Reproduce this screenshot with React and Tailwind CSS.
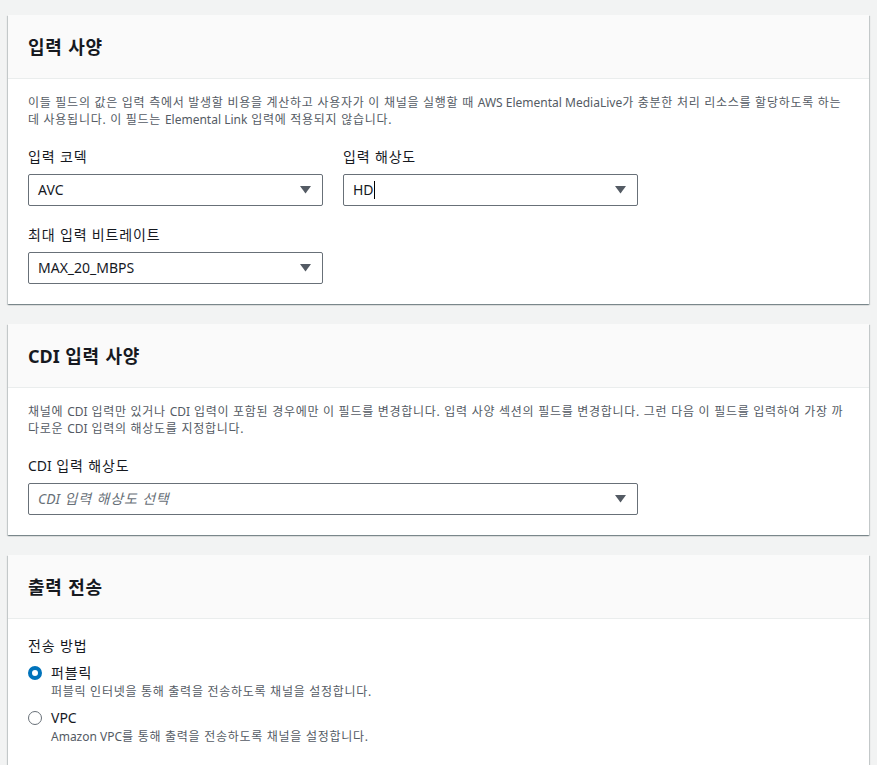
const font = { fontFamily: '"Noto Sans", "Noto Sans CJK KR", sans-serif' };

function Caret() {
  return (
    <svg width="11" height="8" viewBox="0 0 11 8" className="shrink-0">
      <path d="M0 0 H11 L5.5 7.5 Z" fill="#545b64" />
    </svg>
  );
}

// Latin runs keep normal spacing, hangul gets a bit wider
function L({ children }) {
  return <span className="tracking-normal">{children}</span>;
}

function Select({ value, placeholder, cursor }) {
  return (
    <div className="flex h-8 items-center justify-between rounded-[2px] border border-[#687078] bg-white pl-[9px] pr-[11px]">
      {value ? (
        <span className="flex items-center text-sm text-[#16191f]">
          {value}
          {cursor && <span className="inline-block h-[18px] w-px bg-black" />}
        </span>
      ) : (
        <span className="text-sm italic tracking-[0.06em] text-[#687078]">{placeholder}</span>
      )}
      <Caret />
    </div>
  );
}

function Field({ label, children }) {
  return (
    <div>
      <div className="mb-[6px] text-sm leading-[22px] tracking-[0.06em] text-[#16191f]">{label}</div>
      {children}
    </div>
  );
}

function Card({ title, children }) {
  return (
    <div className="bg-white shadow-[0_1px_1px_0_rgba(0,28,36,0.3),1px_1px_1px_0_rgba(0,28,36,0.15),-1px_1px_1px_0_rgba(0,28,36,0.15)]">
      <div className="border-b border-[#eaeded] bg-[#fafafa] px-5 pt-5 pb-[19px]">
        <h2 className="text-lg font-bold leading-6 tracking-[0.045em] text-[#16191f]">{title}</h2>
      </div>
      <div className="px-5 pb-5 pt-[15px]">{children}</div>
    </div>
  );
}

function Radio({ checked, label, desc }) {
  return (
    <div className="flex gap-[9px]">
      <div className="pt-[4px]">
        {checked ? (
          <div className="h-[14px] w-[14px] rounded-full border-[4px] border-[#0073bb] bg-white" />
        ) : (
          <div className="h-[14px] w-[14px] rounded-full border-[1.5px] border-[#687078] bg-white" />
        )}
      </div>
      <div>
        <div className="text-sm leading-[22px] tracking-[0.06em] text-[#16191f]">{label}</div>
        <div className="text-xs leading-4 tracking-[0.06em] text-[#545b64]">{desc}</div>
      </div>
    </div>
  );
}

export default function App() {
  return (
    <div style={font} className="min-h-[765px] bg-[#f2f3f3] px-2 pt-[15px] pb-5">
      <div className="flex flex-col gap-5">
        <Card title="입력 사양">
          <p className="text-xs leading-[17px] tracking-[0.06em] text-[#545b64]">
            이들 필드의 값은 입력 측에서 발생할 비용을 계산하고 사용자가 이 채널을 실행할 때 <L>AWS Elemental MediaLive</L>가 충분한 처리 리소스를 할당하도록 하는 데 사용됩니다. 이 필드는 <L>Elemental Link</L> 입력에 적용되지 않습니다.
          </p>
          <div className="mt-[18px] grid w-[610px] grid-cols-2 gap-x-5 gap-y-[18px]">
            <Field label="입력 코덱">
              <Select value="AVC" />
            </Field>
            <Field label="입력 해상도">
              <Select value="HD" cursor />
            </Field>
            <Field label="최대 입력 비트레이트">
              <Select value="MAX_20_MBPS" />
            </Field>
          </div>
        </Card>

        <Card title={<><L>CDI</L> 입력 사양</>}>
          <p className="text-xs leading-[17px] tracking-[0.06em] text-[#545b64]">
            채널에 <L>CDI</L> 입력만 있거나 <L>CDI</L> 입력이 포함된 경우에만 이 필드를 변경합니다. 입력 사양 섹션의 필드를 변경합니다. 그런 다음 이 필드를 입력하여 가장 까다로운 <L>CDI</L> 입력의 해상도를 지정합니다.
          </p>
          <div className="mt-[18px] w-[610px]">
            <Field label={<><L>CDI</L> 입력 해상도</>}>
              <Select placeholder={<><L>CDI</L> 입력 해상도 선택</>} />
            </Field>
          </div>
        </Card>

        <Card title="출력 전송">
          <div className="pt-[1px]">
            <div className="mb-[5px] text-sm leading-[22px] tracking-[0.06em] text-[#16191f]">전송 방법</div>
            <div className="flex flex-col gap-[7px]">
              <Radio checked label="퍼블릭" desc="퍼블릭 인터넷을 통해 출력을 전송하도록 채널을 설정합니다." />
              <Radio label={<L>VPC</L>} desc={<><L>Amazon VPC</L>를 통해 출력을 전송하도록 채널을 설정합니다.</>} />
            </div>
          </div>
        </Card>
      </div>
    </div>
  );
}
